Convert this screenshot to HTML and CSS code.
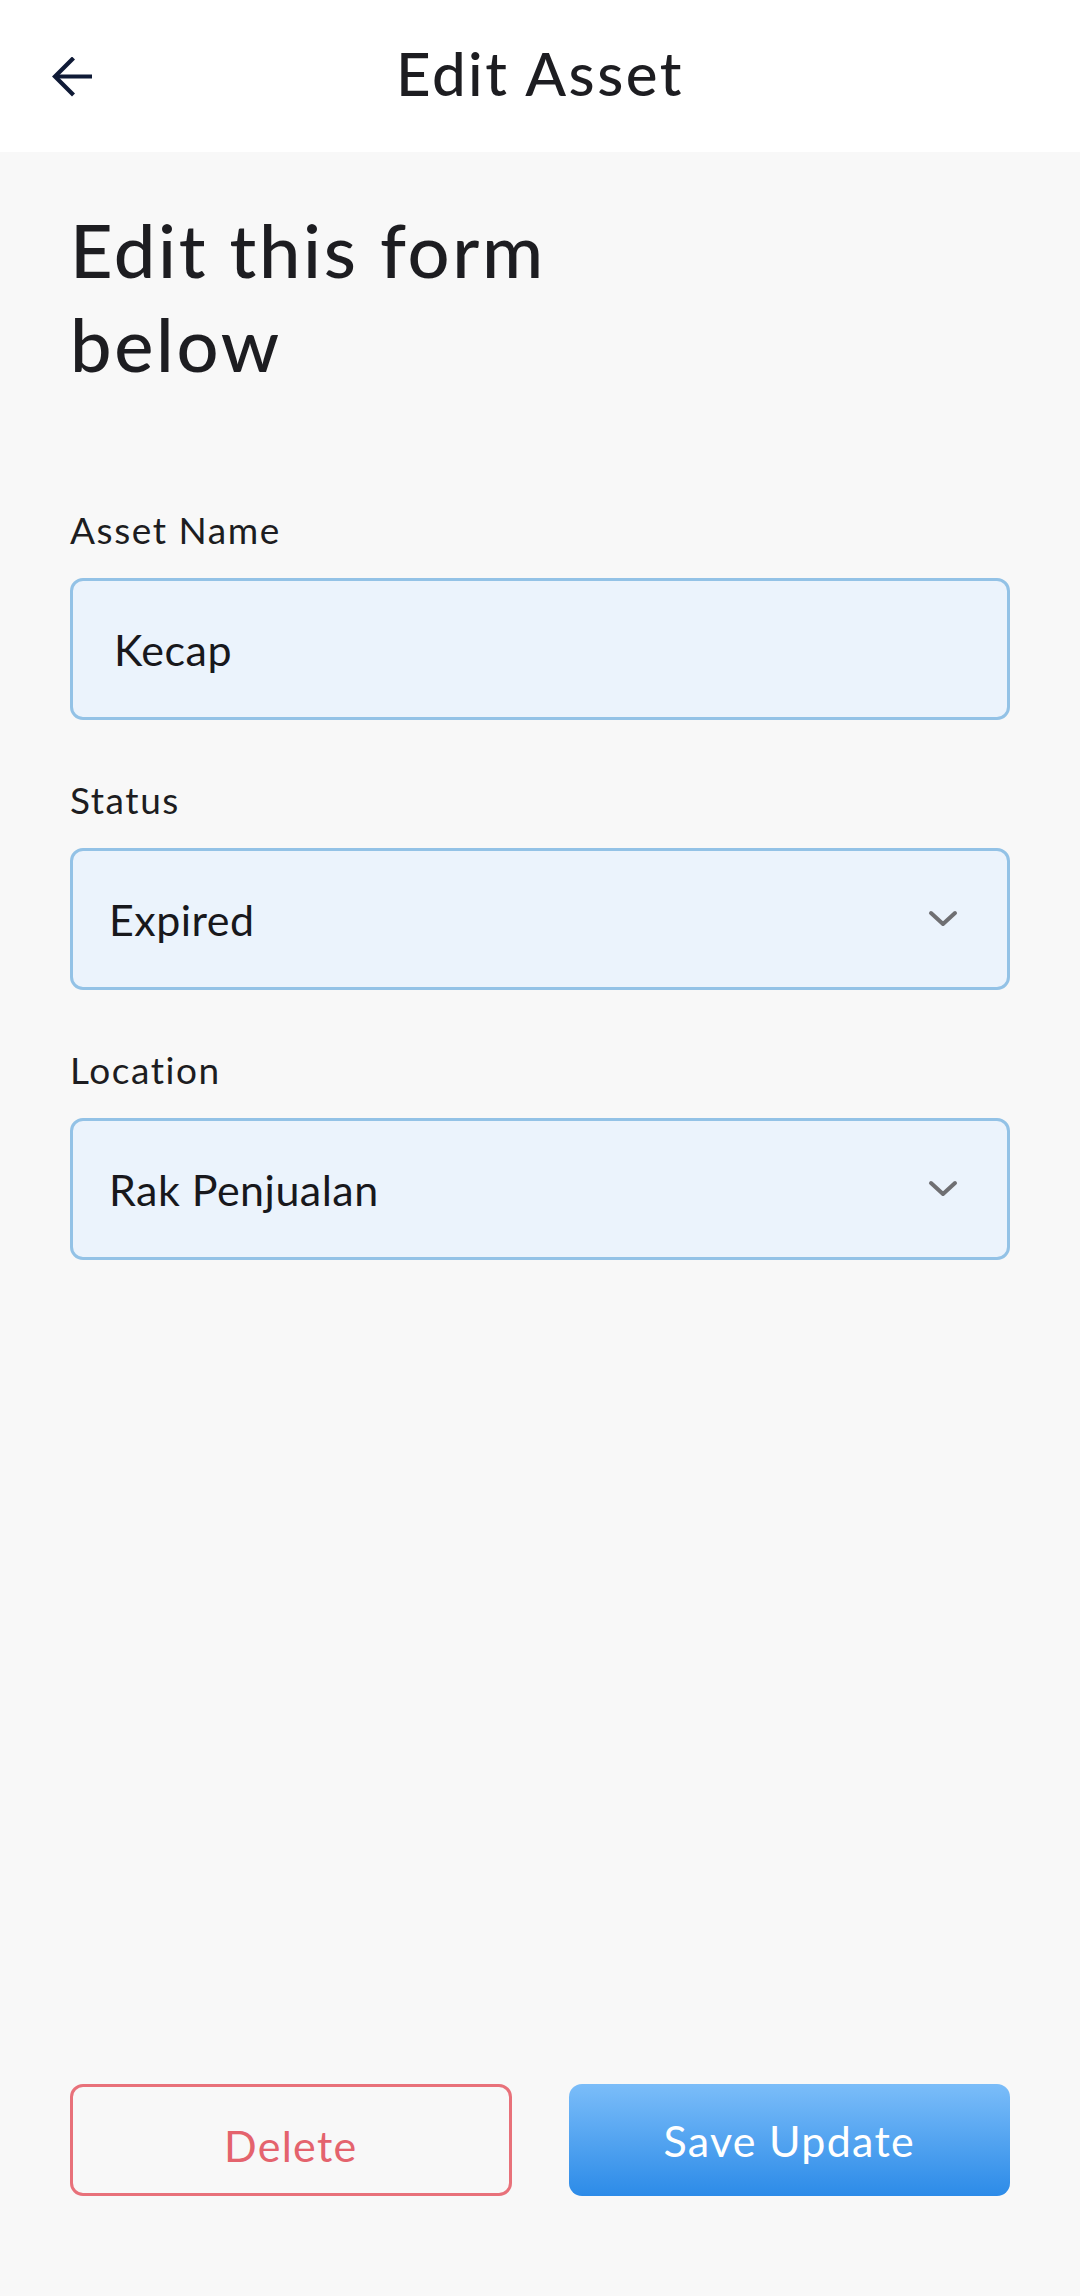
FILE: index.html
```html
<!DOCTYPE html>
<html>
<head>
<meta charset="utf-8">
<link rel="stylesheet" href="styles.css">
</head>
<body>
<div class="page">
  <header class="topbar">
    <div class="back">
      <svg width="40" height="40" viewBox="0 0 40 40" fill="none" stroke="#0f1a36" stroke-width="4.2" stroke-linecap="butt" stroke-linejoin="miter">
        <path d="M3 19.5H40"/>
        <path d="M21.5 1L3 19.5L21.5 38"/>
      </svg>
    </div>
    <h1 class="title">Edit Asset</h1>
    <div></div>
  </header>
  <main class="content">
    <h2 class="heading">Edit this form<br>below</h2>
    <div class="form">
      <div class="field">
        <label class="label">Asset Name</label>
        <div class="box input"><span>Kecap</span></div>
      </div>
      <div class="field">
        <label class="label">Status</label>
        <div class="box select"><span>Expired</span>
          <svg class="chev" width="30" height="18" viewBox="0 0 30 18" fill="none" stroke="#6f6f72" stroke-width="4" stroke-linecap="round" stroke-linejoin="round"><path d="M3 3L15 14L27 3"/></svg>
        </div>
      </div>
      <div class="field">
        <label class="label">Location</label>
        <div class="box select"><span>Rak Penjualan</span>
          <svg class="chev" width="30" height="18" viewBox="0 0 30 18" fill="none" stroke="#6f6f72" stroke-width="4" stroke-linecap="round" stroke-linejoin="round"><path d="M3 3L15 14L27 3"/></svg>
        </div>
      </div>
    </div>
    <div class="actions">
      <button class="btn delete">Delete</button>
      <button class="btn save">Save Update</button>
    </div>
  </main>
</div>
</body>
</html>
```
FILE: styles.css
```css
html, body {
  margin: 0;
  padding: 0;
}
body {
  background: #f8f8f8;
  font-family: Lato, "Open Sans", sans-serif;
  color: #1d1d21;
  letter-spacing: 0.03em;
}
.page {
  min-height: 2296px;
  display: flex;
  flex-direction: column;
}
.topbar {
  height: 152px;
  background: #ffffff;
  display: grid;
  grid-template-columns: 1fr auto 1fr;
  align-items: center;
}
.back {
  padding-left: 52px;
  padding-top: 2px;
  display: flex;
}
.title {
  margin: 0;
  font-size: 60px;
  font-weight: 500;
  line-height: 1;
  padding-bottom: 6px;
  color: #1d1d21;
  letter-spacing: 0.042em;
}
.content {
  flex: 1;
  display: flex;
  flex-direction: column;
  padding: 0 70px 100px;
}
.heading {
  margin: 51px 0 0;
  font-size: 74px;
  font-weight: 500;
  line-height: 94px;
  color: #1d1d21;
  letter-spacing: 0.036em;
}
.form {
  margin-top: 117px;
  display: flex;
  flex-direction: column;
  gap: 58px;
}
.field {
  display: flex;
  flex-direction: column;
}
.label {
  font-size: 37px;
  line-height: 44px;
  font-weight: 400;
  margin-bottom: 26px;
  color: #1d1d21;
  letter-spacing: 0.042em;
}
.box {
  height: 142px;
  box-sizing: border-box;
  border: 3px solid #93c2e6;
  border-radius: 13px;
  background: #ebf3fc;
  display: flex;
  align-items: center;
  font-size: 43px;
  color: #18181c;
}
.input {
  padding-left: 41px;
}
.select {
  padding-left: 36px;
  padding-right: 49px;
  justify-content: space-between;
}
.actions {
  margin-top: auto;
  display: grid;
  grid-template-columns: 1fr 1fr;
  gap: 57px;
}
.btn {
  height: 112px;
  border-radius: 13px;
  font-family: Lato, "Open Sans", sans-serif;
  font-size: 43px;
  font-weight: 400;
  letter-spacing: 0.03em;
  cursor: pointer;
}
.delete {
  background: transparent;
  border: 3px solid #e8717a;
  color: #e4636d;
  padding-top: 12px;
}
.save {
  border: none;
  color: #ffffff;
  background: linear-gradient(to bottom, #7bbdf9, #2c8be8);
}
```
